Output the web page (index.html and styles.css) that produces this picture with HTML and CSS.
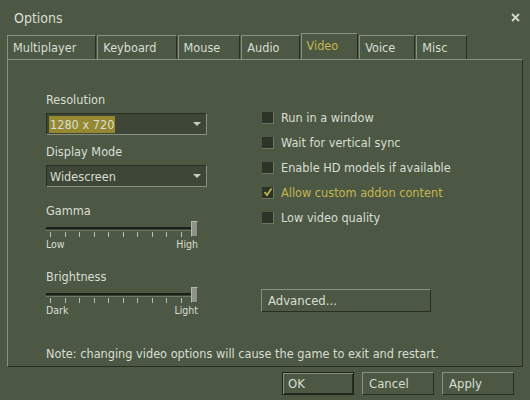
FILE: index.html
```html
<!DOCTYPE html>
<html lang="en">
<head>
  <meta charset="UTF-8" />
  <title>Options</title>
  <link rel="stylesheet" href="styles.css">
</head>
<body>

<div class="window">
  <div class="titlebar">
    <span class="title">Options</span>
    <svg class="close" width="9" height="9" viewBox="0 0 9 9">
      <path d="M1 1 L8 8 M8 1 L1 8" stroke="#d2d8cc" stroke-width="1.8" fill="none"/>
    </svg>
  </div>

  <div class="tabs">
    <div class="tab">Multiplayer</div>
    <div class="tab">Keyboard</div>
    <div class="tab">Mouse</div>
    <div class="tab">Audio</div>
    <div class="tab active">Video</div>
    <div class="tab">Voice</div>
    <div class="tab">Misc</div>
  </div>

  <div class="panel">
    <div class="columns">
      <div class="col-left">
        <div class="label">Resolution</div>
        <div class="combo">
          <span class="combo-text selected">1280 x 720</span>
          <span class="arrow"></span>
        </div>

        <div class="label gap-sm">Display Mode</div>
        <div class="combo">
          <span class="combo-text">Widescreen</span>
          <span class="arrow"></span>
        </div>

        <div class="label gap-lg">Gamma</div>
        <div class="slider">
          <div class="track"></div>
          <div class="ticks">
            <i></i><i></i><i></i><i></i><i></i><i></i><i></i><i></i><i></i><i></i><i></i>
          </div>
          <div class="scale"><span>Low</span><span>High</span></div>
          <div class="thumb"></div>
        </div>

        <div class="label gap-lg">Brightness</div>
        <div class="slider">
          <div class="track"></div>
          <div class="ticks">
            <i></i><i></i><i></i><i></i><i></i><i></i><i></i><i></i><i></i><i></i><i></i>
          </div>
          <div class="scale"><span>Dark</span><span>Light</span></div>
          <div class="thumb"></div>
        </div>
      </div>

      <div class="col-right">
        <div class="check-row"><span class="box"></span>Run in a window</div>
        <div class="check-row"><span class="box"></span>Wait for vertical sync</div>
        <div class="check-row"><span class="box"></span>Enable HD models if available</div>
        <div class="check-row checked">
          <span class="box">
            <svg width="10" height="10" viewBox="0 0 10 10">
              <path d="M1.5 5 L4 8 L8.5 1.5" stroke="#c4b550" stroke-width="1.8" fill="none"/>
            </svg>
          </span>Allow custom addon content
        </div>
        <div class="check-row"><span class="box"></span>Low video quality</div>

        <div class="button advanced">Advanced...</div>
      </div>
    </div>

    <div class="note">Note: changing video options will cause the game to exit and restart.</div>
  </div>

  <div class="footer">
    <div class="button default">OK</div>
    <div class="button">Cancel</div>
    <div class="button">Apply</div>
  </div>
</div>

</body>
</html>
```

FILE: styles.css
```css
:root {
  --bg: #4c5844;
  --entry: #3e4637;
  --light: #889180;
  --dark: #282e22;
  --text: #d8ded3;
  --accent: #c4b550;
  --select: #958831;
}

* { box-sizing: border-box; margin: 0; padding: 0; }

body {
  background: var(--bg);
  color: var(--text);
  font-family: "DejaVu Sans Condensed", "DejaVu Sans", sans-serif;
  font-size: 12.6px;
}

.window {
  width: 530px;
  height: 400px;
  overflow: hidden;
}

/* Title */
.titlebar {
  display: flex;
  align-items: center;
  justify-content: space-between;
  height: 33px;
  padding: 2px 10px 0 14px;
}

.title {
  font-size: 14px;
}

/* Tabs */
.tabs {
  display: flex;
  align-items: flex-end;
  gap: 1px;
  height: 26px;
  padding-left: 7px;
}

.tab {
  height: 24px;
  line-height: 23px;
  padding: 0 19px 0 5px;
  border-top: 1px solid var(--light);
  border-left: 1px solid var(--light);
  border-right: 1px solid var(--dark);
}

.tab.active {
  height: 26px;
  line-height: 24px;
  color: var(--accent);
}

/* Page panel */
.panel {
  display: flex;
  flex-direction: column;
  width: 516px;
  height: 308px;
  margin-left: 7px;
  padding: 32px 0 4px 38px;
  border-top: 1px solid var(--light);
  border-left: 1px solid var(--light);
  border-right: 1px solid var(--dark);
  border-bottom: 1px solid var(--dark);
}

.columns {
  display: flex;
  gap: 55px;
}

.col-left {
  width: 161px;
}

.label {
  height: 16px;
  line-height: 16px;
}

.label.gap-sm { margin-top: 9px; }
.label.gap-lg { margin-top: 16px; }

.combo {
  display: flex;
  align-items: center;
  justify-content: space-between;
  height: 22px;
  margin-top: 5px;
  padding: 0 5px 0 2px;
  background: var(--entry);
  border-top: 1px solid var(--dark);
  border-left: 1px solid var(--dark);
  border-bottom: 1px solid var(--light);
  border-right: 1px solid var(--light);
}

.combo-text {
  height: 17px;
  line-height: 17px;
  padding: 0 1px;
}

.combo-text.selected {
  background: var(--select);
}

.arrow {
  width: 0;
  height: 0;
  border-left: 4px solid transparent;
  border-right: 4px solid transparent;
  border-top: 4px solid #c6ccc0;
}

/* Sliders */
.slider {
  position: relative;
  width: 152px;
  height: 34px;
  padding-top: 8px;
}

.track {
  height: 4px;
  border-top: 2px solid #1c2118;
  border-bottom: 1px solid #6e7866;
  background: #3a4234;
}

.ticks {
  display: flex;
  justify-content: space-between;
  height: 5px;
  margin-top: 1px;
  padding: 0 2px 0 4px;
}

.ticks i {
  width: 1px;
  background: #b9c0b3;
}

.scale {
  display: flex;
  justify-content: space-between;
  margin-top: 2px;
  font-size: 10.5px;
  line-height: 11px;
}

.thumb {
  position: absolute;
  top: 2px;
  right: 0;
  width: 7px;
  height: 16px;
  background: #8e9389;
  border-top: 1px solid #b4b9ae;
  border-left: 1px solid #b4b9ae;
  border-right: 1px solid #4a5045;
  border-bottom: 1px solid #4a5045;
}

/* Checkboxes */
.col-right {
  width: 169px;
  padding-top: 13px;
}

.check-row {
  display: flex;
  align-items: center;
  height: 25px;
  white-space: nowrap;
}

.check-row.checked {
  color: var(--accent);
}

.box {
  display: flex;
  align-items: center;
  justify-content: center;
  flex-shrink: 0;
  width: 12px;
  height: 12px;
  margin-right: 7px;
  background: #2c3327;
  border-bottom: 1px solid #6c7664;
  border-right: 1px solid #6c7664;
}

/* Buttons */
.button {
  height: 23px;
  line-height: 21px;
  padding-left: 6px;
  font-size: 13px;
  border-top: 1px solid var(--light);
  border-left: 1px solid var(--light);
  border-right: 1px solid var(--dark);
  border-bottom: 1px solid var(--dark);
}

.advanced {
  margin-top: 59px;
  margin-left: -1px;
}

.note {
  margin-top: auto;
  line-height: 16px;
}

.footer {
  display: flex;
  justify-content: flex-end;
  gap: 8px;
  padding: 5px 16px 0 0;
}

.footer .button {
  width: 72px;
}

.button.default {
  border: 1px solid #1e231a;
  box-shadow: inset 1px 1px 0 var(--light), inset -1px -1px 0 var(--dark);
  padding-left: 5px;
}
```
